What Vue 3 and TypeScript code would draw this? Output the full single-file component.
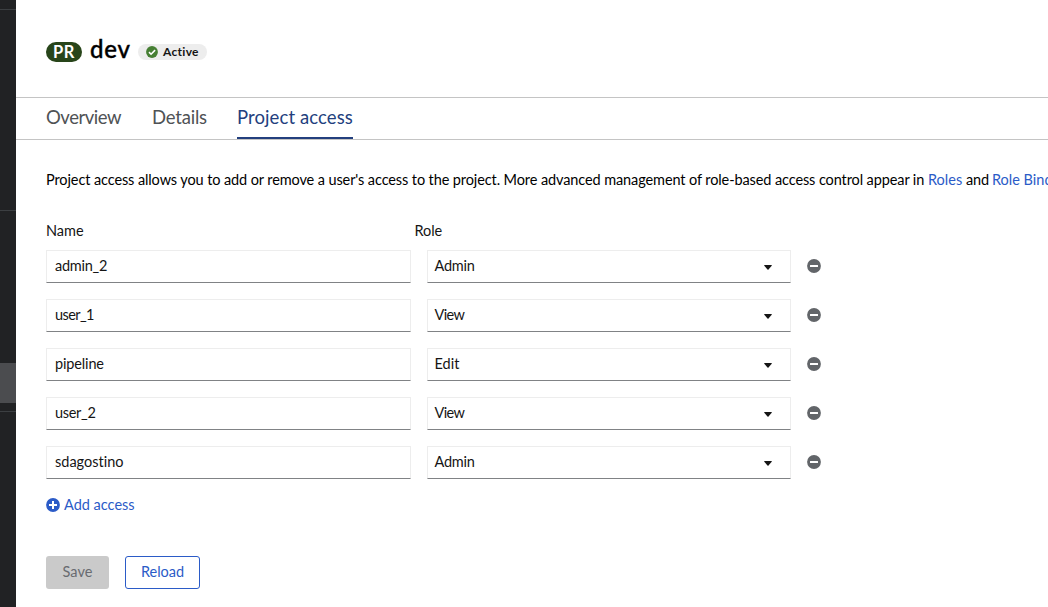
<script setup lang="ts">
import { ref } from 'vue'

interface Access {
  name: string
  role: string
}

const tabs = ['Overview', 'Details', 'Project access']
const activeTab = ref('Project access')

const rows = ref<Access[]>([
  { name: 'admin_2', role: 'Admin' },
  { name: 'user_1', role: 'View' },
  { name: 'pipeline', role: 'Edit' },
  { name: 'user_2', role: 'View' },
  { name: 'sdagostino', role: 'Admin' },
])

const slug = (s: string) => s.toLowerCase().replace(/\W/g, '-')
const remove = (i: number) => rows.value.splice(i, 1)
const add = () => rows.value.push({ name: '', role: 'View' })
</script>

<template>
  <div class="page">
    <aside class="sidebar">
      <div class="group first"></div>
      <div class="group second"></div>
      <div class="group third"><div class="current"></div></div>
      <div class="group"></div>
    </aside>
    <main class="main">
      <header class="header">
        <span class="kind"><span>PR</span></span>
        <h1 class="title">dev</h1>
        <span class="status">
          <svg width="12" height="12" viewBox="0 0 512 512">
            <circle cx="256" cy="256" r="252" fill="#467f33" />
            <path d="M128 262l88 88 172-172" fill="none" stroke="#fff" stroke-width="68" />
          </svg>
          <span class="status-text">Active</span>
        </span>
      </header>
      <nav class="tabs">
        <a
          v-for="tab in tabs"
          :key="tab"
          :class="['tab', slug(tab), { active: tab === activeTab }]"
          @click="activeTab = tab"
        ><span>{{ tab }}</span></a>
      </nav>
      <section class="content">
        <p class="intro">
          <span class="sentence">Project access allows you to add or remove a user's access to the project. More advanced management of role-based access control appear in</span>
          <a class="link roles">Roles</a><span class="and">and</span><a class="link">Role Bindings</a>
        </p>
        <div class="labels">
          <span class="label-name">Name</span>
          <span class="label-role">Role</span>
        </div>
        <div class="rows">
          <div v-for="(row, i) in rows" :key="i" class="row">
            <div class="field"><span :class="slug(row.name)">{{ row.name }}</span></div>
            <div class="field select">
              <span :class="slug(row.role)">{{ row.role }}</span>
              <svg width="8" height="5" viewBox="0 0 8 5"><path d="M.7 0h6.6q.9.1.4.8L4.5 4.5q-.5.5-1 0L.3.8Q-.2.1.7 0z" fill="#151515" /></svg>
            </div>
            <button class="minus" @click="remove(i)">
              <svg width="14" height="14" viewBox="0 0 14 14">
                <circle cx="7" cy="7" r="6.9" fill="#626569" />
                <rect x="3" y="6" width="8" height="2" rx=".3" fill="#fff" />
              </svg>
            </button>
          </div>
        </div>
        <button class="add" @click="add">
          <svg width="14" height="14" viewBox="0 0 14 14">
            <circle cx="7" cy="7" r="6.9" fill="#2b5bc7" />
            <path d="M7 3v8M3 7h8" stroke="#fff" stroke-width="2" />
          </svg>
          <span>Add access</span>
        </button>
        <div class="actions">
          <button class="btn save" disabled><span>Save</span></button>
          <button class="btn reload"><span>Reload</span></button>
        </div>
      </section>
    </main>
  </div>
</template>

<style>
html, body { margin: 0; overflow: hidden; }
</style>

<style scoped>
.page {
  display: flex;
  width: 1048px;
  height: 607px;
  overflow: hidden;
  background: #fff;
  color: #151515;
  font: 14.5px/21px Lato, "Open Sans", sans-serif;
  font-variant-ligatures: none;
}
.page * { box-sizing: border-box; }
button { font: inherit; letter-spacing: inherit; padding: 0; border: 0; background: none; }
svg { display: block; flex: none; }
.sidebar { flex: none; width: 16px; background: #212224; }
.group { border-bottom: 1px solid #3c3f42; }
.group:last-child { border: 0; }
.first { height: 10px; }
.second { height: 201px; }
.third { height: 201px; padding-top: 152px; }
.current { height: 40px; background: #4b4c4f; }
.main { flex: 1; min-width: 0; }
.header {
  display: flex;
  align-items: center;
  height: 98px;
  padding: 6px 30px 0;
  border-bottom: 1px solid #c4c4c4;
}
.kind {
  width: 36px;
  height: 20px;
  border-radius: 10px;
  background: #28451a;
  color: #fff;
  font-size: 16.5px;
  font-weight: 700;
  letter-spacing: .5px;
  line-height: 20px;
  text-align: center;
}
.title {
  width: 41px;
  margin: -5px 0 0 8px;
  color: #000;
  font: 500 24px/30px Lato, sans-serif;
  letter-spacing: .8px;
  -webkit-text-stroke: .4px #000;
}
.status {
  display: flex;
  align-items: center;
  gap: 5px;
  width: 69px;
  height: 16px;
  margin-left: 7px;
  padding-left: 8px;
  border-radius: 8px;
  background: #ededed;
  font-size: 12px;
  font-weight: 700;
  letter-spacing: .3px;
  line-height: 16px;
}
.tabs {
  display: flex;
  gap: 30px;
  height: 42px;
  padding: 0 30px;
  border-bottom: 1px solid #c4c4c4;
  color: #4f5255;
  font-size: 18.5px;
  line-height: 38px;
  white-space: nowrap;
}
.tab { height: 41px; }
.overview { width: 76px; letter-spacing: -.45px; }
.details { width: 55px; letter-spacing: -.2px; }
.project-access { width: 116px; letter-spacing: .1px; }
.active { border-bottom: 2px solid #233f7e; color: #233f7e; }
.content { padding: 29px 30px 0; }
.intro { display: flex; margin: 0; color: #000; white-space: nowrap; }
.sentence { flex: none; width: 882px; letter-spacing: -.105px; }
.link { flex: none; color: #2b5bc7; }
.roles { width: 38px; }
.and { flex: none; width: 26px; letter-spacing: -.2px; }
.labels { display: flex; height: 21px; margin-top: 30px; }
.label-name { width: 368.5px; }
.label-role { letter-spacing: -.1px; }
.rows { display: flex; flex-direction: column; gap: 16px; margin-top: 9px; }
.row { display: flex; align-items: center; gap: 16px; }
.field {
  width: 365px;
  height: 33px;
  padding: 0 8px;
  border: 1px solid #ededed;
  border-bottom-color: #808285;
  line-height: 30px;
}
.admin_2, .admin { letter-spacing: -.25px; }
.user_1 { letter-spacing: -.6px; }
.user_2 { letter-spacing: -.3px; }
.pipeline { letter-spacing: -.15px; }
.view { letter-spacing: -.65px; }
.sdagostino { letter-spacing: 0; }
.select {
  display: flex;
  align-items: flex-start;
  justify-content: space-between;
  width: 364px;
  padding: 0 18px 0 6.5px;
}
.select svg { margin-top: 14px; }
.minus { height: 14px; margin-top: -2px; }
.add { display: flex; align-items: center; gap: 4px; height: 21px; margin-top: 16px; color: #2b5bc7; }
.add svg { margin-top: -2px; }
.add span { margin-top: -2px; }
.actions { display: flex; gap: 16px; margin-top: 40px; }
.btn { height: 33px; border-radius: 3px; padding-bottom: 2px; line-height: 28px; }
.save { width: 63px; background: #cacaca; color: #686b70; }
.reload { width: 75px; border: 1px solid #2b5bc7; color: #2b5bc7; }
</style>
